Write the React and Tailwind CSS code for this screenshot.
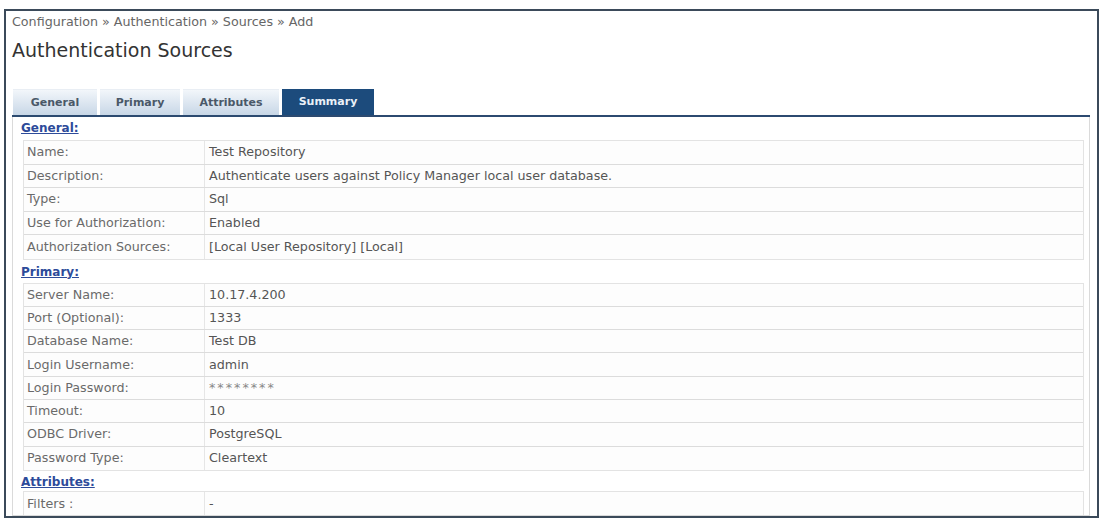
import React from "react";

const general = [
  ["Name:", "Test Repository"],
  ["Description:", "Authenticate users against Policy Manager local user database."],
  ["Type:", "Sql"],
  ["Use for Authorization:", "Enabled"],
  ["Authorization Sources:", "[Local User Repository] [Local]"],
];

const primary = [
  ["Server Name:", "10.17.4.200"],
  ["Port (Optional):", "1333"],
  ["Database Name:", "Test DB"],
  ["Login Username:", "admin"],
  ["Login Password:", "********"],
  ["Timeout:", "10"],
  ["ODBC Driver:", "PostgreSQL"],
  ["Password Type:", "Cleartext"],
];

const tabs = ["General", "Primary", "Attributes", "Summary"];
const tabWidths = ["w-[84px]", "w-[80px]", "w-[96px]", "w-[92px]"];

const SectionTitle = ({ children, className = "" }) => (
  <div className={`pl-[8px] text-[12px] leading-[14px] font-bold text-[#2d4b9a] underline ${className}`}>
    {children}
  </div>
);

const Table = ({ rows, rowH = "h-[23.5px]", className = "" }) => (
  <div className={`ml-[10px] mr-[5px] border border-[#e3e3e3] bg-[#fdfdfd] ${className}`}>
    {rows.map(([label, value], i) => (
      <div
        key={label}
        className={`flex ${rowH} items-center ${i < rows.length - 1 ? "border-b border-[#dcdcdc]" : ""}`}
      >
        <div className="flex h-full w-[181px] items-center border-r border-[#e6e6e6] pl-[3px] text-[#6a6a6a]">
          {label}
        </div>
        <div className={`pl-[4px] ${value === "********" ? "tracking-[2px] text-[#888]" : "text-[#555]"}`}>
          {value}
        </div>
      </div>
    ))}
  </div>
);

export default function App() {
  return (
    <div className="h-[520px] w-[1101px] bg-white pt-[9px] font-['DejaVu_Sans',Verdana,sans-serif] text-[12.7px] leading-[14px]">
      <div className="ml-[4px] flex h-[509px] w-[1095px] flex-col overflow-hidden border-2 border-[#3b4a5a] pl-[6px] pr-[7px]">
        <div className="pt-[4px] text-[#666]">
          Configuration » Authentication » Sources » Add
        </div>
        <h1 className="mt-[10px] text-[19px] leading-[22px] text-[#333]">Authentication Sources</h1>

        <div className="mt-[28px] flex h-[28px] shrink-0 items-end gap-[3px] border-b-2 border-[#2c4a70] pl-[1px] text-[11px]">
          {tabs.map((t, i) =>
            t === "Summary" ? (
              <div
                key={t}
                className={`flex h-[26px] ${tabWidths[i]} items-center justify-center bg-[#1c4b7c] font-bold text-[#eaf1f8]`}
              >
                {t}
              </div>
            ) : (
              <div
                key={t}
                className={`flex h-[26px] ${tabWidths[i]} items-center justify-center border-t border-[#e9eef4] bg-linear-to-b from-[#f2f6fa] to-[#c8d7e7] font-bold text-[#4a5868]`}
              >
                {t}
              </div>
            )
          )}
        </div>

        <div className="min-h-0 flex-1 overflow-hidden border-x border-b border-[#dadada] pt-[4px]">
          <SectionTitle>General:</SectionTitle>
          <Table rows={general} className="mt-[5px]" />
          <SectionTitle className="mt-[5px]">Primary:</SectionTitle>
          <Table rows={primary} rowH="h-[23.3px]" className="mt-[4px]" />
          <SectionTitle className="mt-[4px]">Attributes:</SectionTitle>
          <Table rows={[["Filters :", "-"]]} className="mt-[2px] border-b-0" />
        </div>
      </div>
    </div>
  );
}
